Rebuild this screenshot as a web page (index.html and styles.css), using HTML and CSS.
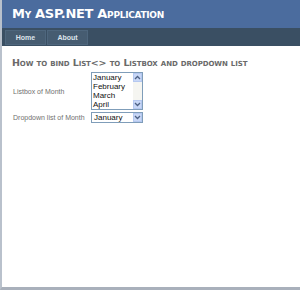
FILE: index.html
```html
<!DOCTYPE html>
<html lang="en">
<head>
    <meta charset="UTF-8">
    <title>My ASP.NET Application</title>
    <link rel="stylesheet" href="styles.css">
</head>
<body>
    <div class="page">
        <div class="header">
            <h1>My ASP.NET Application</h1>
        </div>
        <div class="menu">
            <a class="menu-item" href="#">Home</a>
            <a class="menu-item" href="#">About</a>
        </div>
        <div class="main">
            <h2>How to bind List&lt;&gt; to Listbox and dropdown list</h2>
            <div class="form-grid">
                <div class="label">Listbox of Month</div>
                <div class="listbox">
                    <div class="options">
                        <div>January</div>
                        <div>February</div>
                        <div>March</div>
                        <div>April</div>
                    </div>
                    <div class="scrollbar">
                        <div class="scroll-btn">
                            <svg width="7" height="7" viewBox="0 0 7 7"><path d="M1 5 L3.5 2.5 L6 5" fill="none" stroke="#4d6185" stroke-width="1.3"/></svg>
                        </div>
                        <div class="scroll-track"></div>
                        <div class="scroll-btn">
                            <svg width="7" height="7" viewBox="0 0 7 7"><path d="M1 2 L3.5 4.5 L6 2" fill="none" stroke="#4d6185" stroke-width="1.3"/></svg>
                        </div>
                    </div>
                </div>
                <div class="label">Dropdown list of Month</div>
                <div class="dropdown">
                    <span class="dropdown-text">January</span>
                    <div class="scroll-btn">
                        <svg width="7" height="7" viewBox="0 0 7 7"><path d="M1 2 L3.5 4.5 L6 2" fill="none" stroke="#4d6185" stroke-width="1.3"/></svg>
                    </div>
                </div>
            </div>
        </div>
    </div>
</body>
</html>
```

FILE: styles.css
```css
body {
    margin: 0;
    padding: 0;
    background: #fff;
    font-family: "Liberation Sans", Arial, sans-serif;
}
.page {
    height: 287px;
    border-left: 2px solid #b9c1cc;
    border-bottom: 3px solid #a9b0bb;
    background: #fff;
}
.header {
    height: 28px;
    background: #4b6c9e;
}
h1 {
    margin: 0;
    padding: 6px 0 0 10px;
    font-family: "DejaVu Sans", sans-serif;
    font-variant: small-caps;
    font-size: 13px;
    font-weight: bold;
    color: #fff;
    letter-spacing: -0.3px;
}
.menu {
    height: 18px;
    background: #3a4f63;
    padding: 2px 0 0 3px;
    box-sizing: border-box;
    display: flex;
    gap: 1px;
}
.menu-item {
    width: 41px;
    height: 15px;
    background: #465c71;
    border: 1px solid #4e667d;
    box-sizing: border-box;
    color: #dde4ec;
    font-size: 7px;
    font-weight: bold;
    text-decoration: none;
    display: flex;
    align-items: center;
    justify-content: center;
}
.main {
    padding: 11px 10px;
}
h2 {
    margin: 0 0 4px;
    font-family: "DejaVu Sans", sans-serif;
    font-variant: small-caps;
    font-size: 9.5px;
    font-weight: bold;
    color: #6a6a6a;
    letter-spacing: -0.1px;
}
.form-grid {
    display: grid;
    grid-template-columns: 79px auto;
    row-gap: 2px;
    align-items: center;
    justify-content: start;
}
.label {
    font-size: 7px;
    color: #707070;
    padding-left: 1px;
}
.listbox {
    width: 52px;
    height: 38px;
    border: 1px solid #7f9db9;
    box-sizing: border-box;
    display: flex;
}
.options {
    flex: 1;
    font-size: 8px;
    line-height: 9px;
    color: #111;
    padding: 0 0 0 1px;
    overflow: hidden;
}
.scrollbar {
    width: 9px;
    display: flex;
    flex-direction: column;
    background: #f5f5f1;
}
.scroll-track {
    flex: 1;
}
.scroll-btn {
    width: 9px;
    height: 9px;
    background: #c8d7f6;
    border: 1px solid #b5c8f0;
    box-sizing: border-box;
    display: flex;
    align-items: center;
    justify-content: center;
}
.dropdown {
    width: 52px;
    height: 11px;
    border: 1px solid #7f9db9;
    box-sizing: border-box;
    display: flex;
    align-items: center;
}
.dropdown-text {
    flex: 1;
    font-size: 8px;
    color: #111;
    padding-left: 2px;
}
```
